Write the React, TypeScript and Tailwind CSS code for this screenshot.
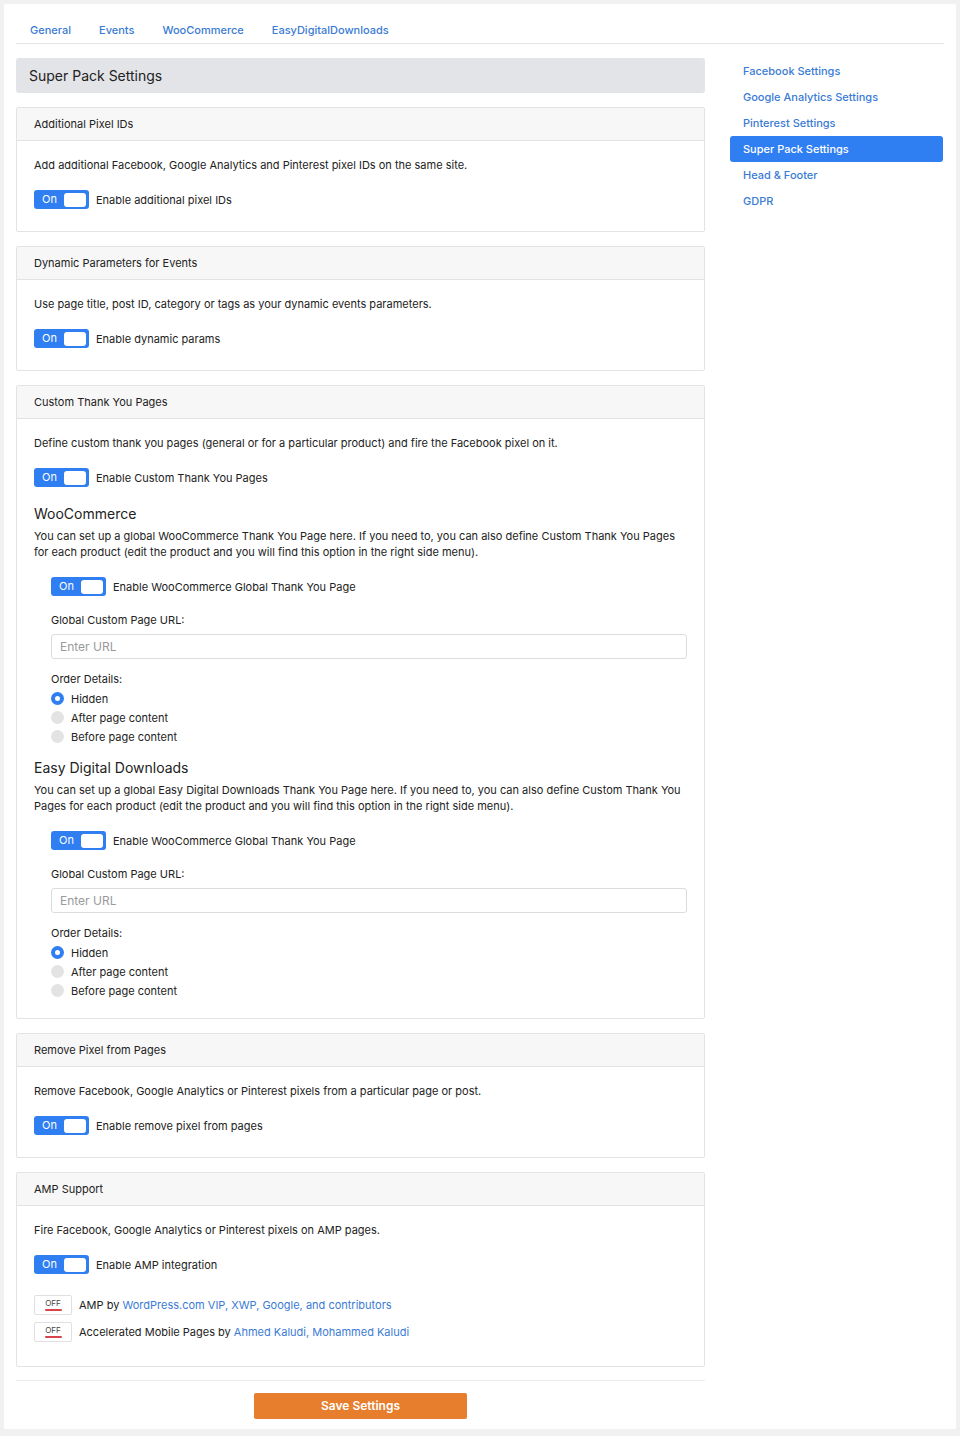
import React from 'react';

const blue = 'text-[#3a7bd5]';

const Toggle: React.FC = () => (
  <span className="inline-flex h-[19px] w-[55px] shrink-0 items-center justify-between rounded-[3px] bg-[#2f7ef2] pl-[8px] pr-[3px]">
    <span className="text-[11px] leading-none text-white">On</span>
    <span className="h-[14px] w-[22px] rounded-[3px] bg-white" />
  </span>
);

const ToggleRow: React.FC<{ label: string }> = ({ label }) => (
  <div className="flex items-center gap-[7px]">
    <Toggle />
    <span>{label}</span>
  </div>
);

const Card: React.FC<{ title: string; tight?: boolean; children: React.ReactNode }> = ({ title, tight, children }) => (
  <section className="rounded-[2px] border border-[#e3e3e3] bg-white">
    <div className="flex h-[33px] items-center border-b border-[#e3e3e3] bg-[#f7f7f7] px-[17px]">{title}</div>
    <div className={`px-[17px] pt-[16px] ${tight ? 'pb-[18px]' : 'pb-[22px]'}`}>{children}</div>
  </section>
);

const Radio: React.FC<{ checked?: boolean; label: string }> = ({ checked, label }) => (
  <div className="flex h-[19px] items-center gap-[7px]">
    {checked ? (
      <span className="flex h-[13px] w-[13px] items-center justify-center rounded-full bg-[#2f7ef2]">
        <span className="h-[5px] w-[5px] rounded-full bg-white" />
      </span>
    ) : (
      <span className="h-[13px] w-[13px] rounded-full bg-[#e3e3e3]" />
    )}
    <span>{label}</span>
  </div>
);

const ThankYouBlock: React.FC<{ title: string; text: string; first?: boolean }> = ({ title, text, first }) => (
  <div>
    <h3 className={`${first ? 'mt-[18px]' : 'mt-[13px]'} text-[14px] leading-[18px] text-[#222]`}>{title}</h3>
    <p className="mt-[5px]">{text}</p>
    <div className="pl-[17px]">
      <div className="mt-[17px]">
        <ToggleRow label="Enable WooCommerce Global Thank You Page" />
      </div>
      <div className="mt-[16px]">Global Custom Page URL:</div>
      <div className="mt-[6px] flex h-[25px] items-center rounded-[3px] border border-[#dcdcdc] px-[8px] text-[12px] text-[#9a9a9a]">
        Enter URL
      </div>
      <div className="mt-[12px]">Order Details:</div>
      <div className="mt-[2px]">
        <Radio checked label="Hidden" />
        <Radio label="After page content" />
        <Radio label="Before page content" />
      </div>
    </div>
  </div>
);

const OffBadge: React.FC = () => (
  <span className="flex h-[20px] w-[38px] shrink-0 flex-col items-center justify-center rounded-[2px] border border-[#e0e0e0] bg-white">
    <span className="text-[8px] leading-[9px] text-[#444]">OFF</span>
    <span className="mt-[1px] h-[2px] w-[17px] rounded-full bg-[#d9434b]" />
  </span>
);

const tabs = ['General', 'Events', 'WooCommerce', 'EasyDigitalDownloads'];
const sideLinks = [
  'Facebook Settings',
  'Google Analytics Settings',
  'Pinterest Settings',
  'Super Pack Settings',
  'Head & Footer',
  'GDPR',
];

export default function App() {
  return (
    <div
      className="min-h-[1436px] bg-[#f1f1f1] p-[4px] text-[11px] leading-[16px] text-[#222]"
      style={{ fontFamily: 'Inter, "Liberation Sans", sans-serif' }}
    >
      <div className="min-h-[1424px] rounded-[2px] bg-white px-[12px] pt-[18px]">
        <nav className="flex border-b border-[#e5e5e5] pb-[5px]">
          {tabs.map((t) => (
            <span key={t} className={`px-[14px] font-medium ${blue}`}>
              {t}
            </span>
          ))}
        </nav>

        <div className="mt-[14px] flex gap-[25px]">
          <main className="w-[689px] shrink-0">
            <div className="flex h-[35px] items-center rounded-[3px] bg-[#e2e4e7] px-[13px] text-[14px] text-[#222]">
              Super Pack Settings
            </div>

            <div className="mt-[14px] flex flex-col gap-[14px]">
              <Card title="Additional Pixel IDs">
                <p>Add additional Facebook, Google Analytics and Pinterest pixel IDs on the same site.</p>
                <div className="mt-[17px]">
                  <ToggleRow label="Enable additional pixel IDs" />
                </div>
              </Card>

              <Card title="Dynamic Parameters for Events">
                <p>Use page title, post ID, category or tags as your dynamic events parameters.</p>
                <div className="mt-[17px]">
                  <ToggleRow label="Enable dynamic params" />
                </div>
              </Card>

              <Card title="Custom Thank You Pages" tight>
                <p>Define custom thank you pages (general or for a particular product) and fire the Facebook pixel on it.</p>
                <div className="mt-[17px]">
                  <ToggleRow label="Enable Custom Thank You Pages" />
                </div>
                <ThankYouBlock
                  first
                  title="WooCommerce"
                  text="You can set up a global WooCommerce Thank You Page here. If you need to, you can also define Custom Thank You Pages for each product (edit the product and you will find this option in the right side menu)."
                />
                <ThankYouBlock
                  title="Easy Digital Downloads"
                  text="You can set up a global Easy Digital Downloads Thank You Page here. If you need to, you can also define Custom Thank You Pages for each product (edit the product and you will find this option in the right side menu)."
                />
              </Card>

              <Card title="Remove Pixel from Pages">
                <p>Remove Facebook, Google Analytics or Pinterest pixels from a particular page or post.</p>
                <div className="mt-[17px]">
                  <ToggleRow label="Enable remove pixel from pages" />
                </div>
              </Card>

              <Card title="AMP Support">
                <p>Fire Facebook, Google Analytics or Pinterest pixels on AMP pages.</p>
                <div className="mt-[17px]">
                  <ToggleRow label="Enable AMP integration" />
                </div>
                <div className="mt-[21px] flex flex-col gap-[7px] pb-[2px]">
                  <div className="flex items-center gap-[7px]">
                    <OffBadge />
                    <span>
                      AMP by <span className={blue}>WordPress.com VIP, XWP, Google, and contributors</span>
                    </span>
                  </div>
                  <div className="flex items-center gap-[7px]">
                    <OffBadge />
                    <span>
                      Accelerated Mobile Pages by <span className={blue}>Ahmed Kaludi, Mohammed Kaludi</span>
                    </span>
                  </div>
                </div>
              </Card>
            </div>

            <div className="mt-[13px] flex justify-center border-t border-[#ececec] pb-[10px] pt-[12px]">
              <button className="h-[26px] w-[213px] rounded-[2px] bg-[#e67e2e] text-[12px] font-semibold text-white">
                Save Settings
              </button>
            </div>
          </main>

          <aside className="flex w-[213px] flex-col">
            {sideLinks.map((l) => {
              const active = l === 'Super Pack Settings';
              return (
                <span
                  key={l}
                  className={`flex h-[26px] items-center px-[13px] font-medium ${
                    active ? 'rounded-[3px] bg-[#2f7ef2] text-white' : blue
                  }`}
                >
                  {l}
                </span>
              );
            })}
          </aside>
        </div>
      </div>
    </div>
  );
}
